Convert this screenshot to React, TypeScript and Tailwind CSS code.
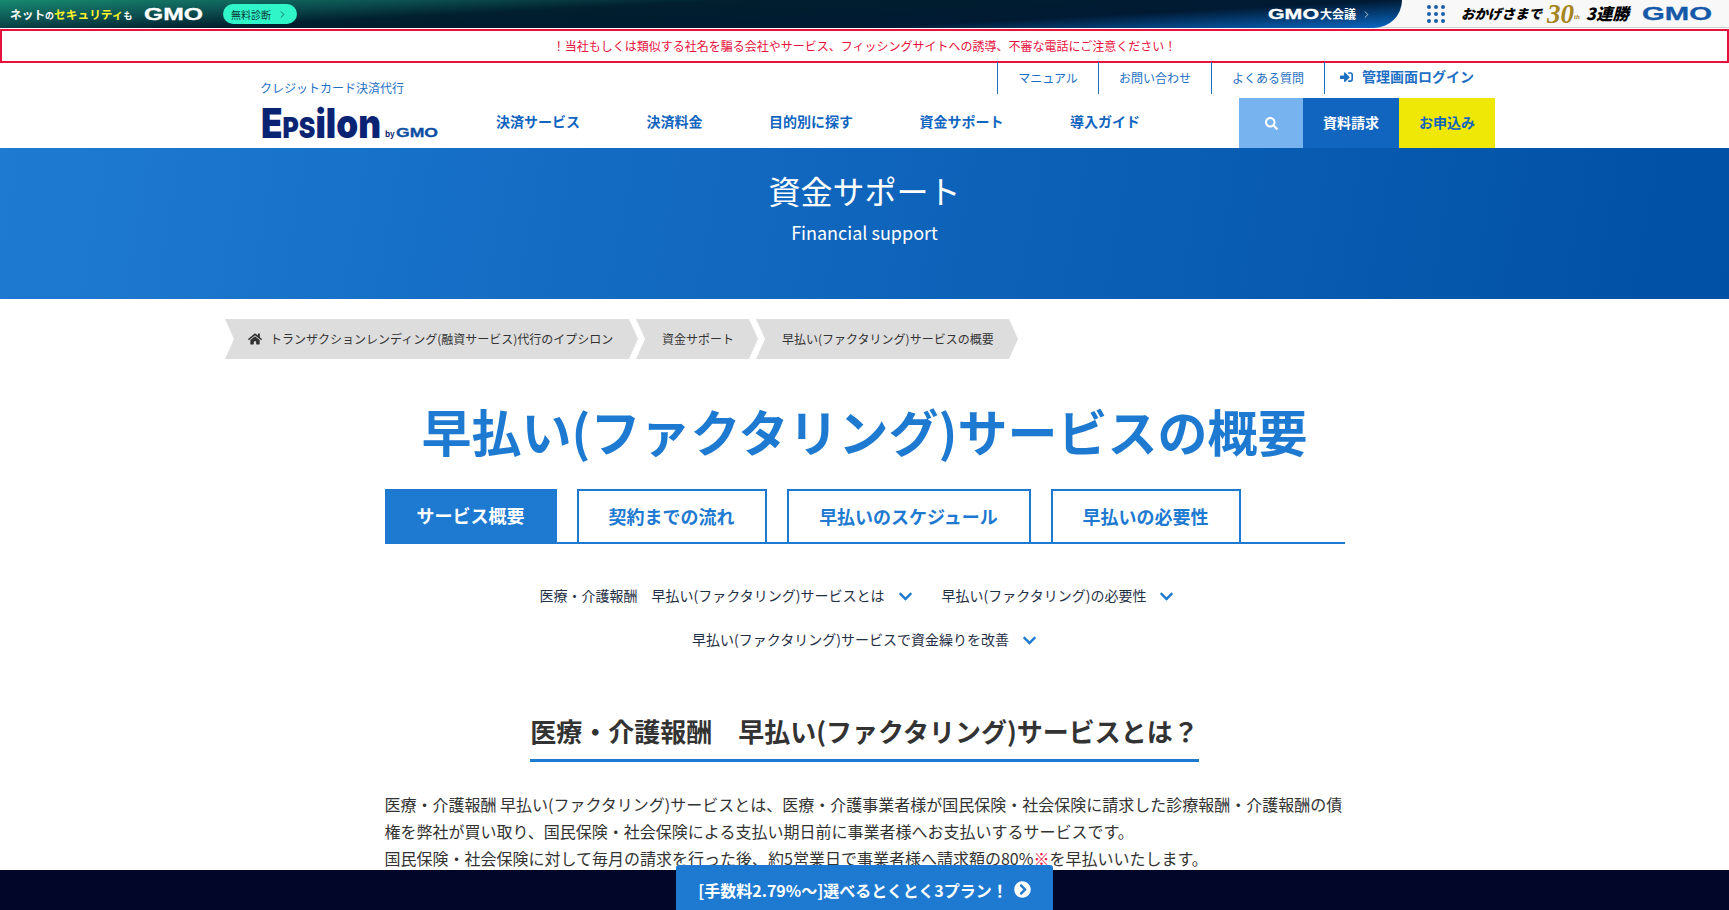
import { FaChevronCircleRight, FaChevronDown, FaHome, FaSearch, FaSignInAlt } from "react-icons/fa";
import { ChevronRight } from "lucide-react";

const GmoLogo = ({ width, height, color }: { width: number; height: number; color: string }) => (
  <svg width={width} height={height} viewBox={`0 0 ${width} ${height}`} className="block overflow-visible">
    <text
      x="0"
      y={height - 1}
      textLength={width}
      lengthAdjust="spacingAndGlyphs"
      fontFamily="Liberation Sans, sans-serif"
      fontWeight="700"
      fontSize={height * 1.25}
      fill={color}
      stroke={color}
      strokeWidth="0.3"
    >
      GMO
    </text>
  </svg>
);

const EpsilonLogo = () => (
  <div className="flex items-end w-[178px] h-[34px]">
    <svg width="122" height="34" viewBox="0 0 122 34" className="block overflow-visible">
      <text
        x="1"
        y="32"
        textLength="120"
        lengthAdjust="spacingAndGlyphs"
        fontFamily="Inter, sans-serif"
        fontWeight="900"
        fontSize="41"
        fill="#0b2373"
      >
        E<tspan fontSize="29">PS</tspan>ilon
      </text>
    </svg>
    <span className="text-[8px] leading-[10px] text-[#0b2373] ml-[3px] mr-[1px] mb-[1px] font-bold">by</span>
    <div className="mb-[2px]">
      <GmoLogo width={42} height={10} color="#0b4ea2" />
    </div>
  </div>
);

const TopBar = () => (
  <div className="flex h-[28px] bg-[#f8f8f8] border-b border-[#d0d0d0]">
    <div className="w-[1402px] h-[28px] rounded-br-[34px] bg-[linear-gradient(177deg,#178a70_0%,#0c4f50_22%,#011f2e_38%,#001a33_72%,#0a6ac8_100%)] flex items-center">
      <div className="ml-[10px] text-[11.7px] font-bold text-white whitespace-nowrap">
        ネット<span className="text-[9px]">の</span>
        <span className="text-[#f8f02a]">セキュリティ</span>
        <span className="text-[9px]">も</span>
      </div>
      <div className="ml-[11px]">
        <GmoLogo width={59} height={13} color="#ffffff" />
      </div>
      <div className="ml-[20px] w-[74px] h-[20px] rounded-full bg-[#30f5c8] flex items-center justify-center gap-[6px] text-[10px] text-[#0b3a3a]">
        無料診断
        <ChevronRight size={11} strokeWidth={1.5} />
      </div>
      <div className="ml-auto mr-[30px] flex items-center gap-[5px]">
        <div className="flex items-center gap-[1px]">
          <GmoLogo width={51} height={11} color="#ffffff" />
          <span className="text-[12px] font-bold text-white">大会議</span>
        </div>
        <ChevronRight size={11} strokeWidth={1.5} className="text-white" />
      </div>
    </div>
    <div className="flex-1 flex items-center">
      <div className="ml-[25px] grid grid-cols-3 gap-[3px]">
        {Array.from({ length: 9 }).map((_, i) => (
          <span key={i} className="w-[4px] h-[4px] rounded-full bg-[#1b5fa8]" />
        ))}
      </div>
      <div className="ml-[16px] flex items-center italic font-black text-black text-[13.5px] whitespace-nowrap">
        おかげさまで
        <span className="ml-[5px] font-['Liberation_Serif',serif] text-[27px] leading-[26px] font-bold text-[#a5851f]">
          30
        </span>
        <span className="font-['Liberation_Serif',serif] text-[7px] mt-[8px] text-[#a5851f] mr-[6px]">th</span>
        <span className="text-[16.5px]">3連勝</span>
      </div>
      <div className="ml-[13px]">
        <GmoLogo width={70} height={15} color="#1459a8" />
      </div>
    </div>
  </div>
);

const Header = () => (
  <div className="w-[1235px] ml-[260px] h-[86px]">
    <div className="flex h-[32px] items-end">
      <div className="text-[12px] leading-[18px] -mb-[3px] text-[#1e6fc4]">クレジットカード決済代行</div>
      <div className="ml-auto flex h-[32px] self-start mr-[21px] text-[#1e6fc4] whitespace-nowrap">
        <a className="w-[101px] border-l border-[#1e6fc4] flex items-center justify-center text-[12px] pb-[1px]">マニュアル</a>
        <a className="w-[113px] border-l border-[#1e6fc4] flex items-center justify-center text-[12px] pb-[1px]">お問い合わせ</a>
        <a className="w-[113px] border-l border-[#1e6fc4] flex items-center justify-center text-[12px] pb-[1px]">よくある質問</a>
        <a className="w-[150px] border-l border-[#1e6fc4] flex items-center pl-[15px] gap-[9px] text-[14px] font-bold pb-[3px]">
          <FaSignInAlt size={14} />
          管理画面ログイン
        </a>
      </div>
    </div>
    <div className="flex items-center h-[50px] mt-[4px]">
      <div className="w-[236px]">
        <EpsilonLogo />
      </div>
      <nav className="flex gap-[66.5px] text-[14px] font-bold text-[#1165bf] -mt-[3px]">
        <a>決済サービス</a>
        <a>決済料金</a>
        <a>目的別に探す</a>
        <a>資金サポート</a>
        <a>導入ガイド</a>
      </nav>
      <div className="ml-auto flex h-[50px] text-[14px] font-bold">
        <div className="w-[64px] bg-[#77b3ef] flex items-center justify-center text-white">
          <FaSearch size={13} />
        </div>
        <div className="w-[96px] bg-[#1165bf] flex items-center justify-center text-white pb-[2px]">資料請求</div>
        <div className="w-[96px] bg-[#efe807] flex items-center justify-center text-[#1165bf] pb-[2px]">お申込み</div>
      </div>
    </div>
  </div>
);

const crumbShape =
  "[clip-path:polygon(0_0,calc(100%-9px)_0,100%_50%,calc(100%-9px)_100%,0_100%,9px_50%)]";

const Breadcrumb = () => (
  <div className="flex ml-[225px] mt-[20px] h-[40px] text-[12px] text-[#333333]">
    <div className={`w-[413px] bg-[#dddddd] flex items-center pl-[23px] gap-[8px] ${crumbShape}`}>
      <FaHome size={14} />
      トランザクションレンディング(融資サービス)代行のイプシロン
    </div>
    <div className={`w-[122px] -ml-[2px] bg-[#dddddd] flex items-center pl-[26px] ${crumbShape}`}>資金サポート</div>
    <div className={`w-[262px] -ml-[2px] bg-[#dddddd] flex items-center pl-[26px] ${crumbShape}`}>
      早払い(ファクタリング)サービスの概要
    </div>
  </div>
);

const Tabs = () => (
  <div className="flex gap-[20px] border-b-2 border-[#1e7ad1] h-[55px] text-[18px] font-bold text-[#1e7ad1]">
    <div className="w-[172px] bg-[#1e7ad1] text-white flex items-center justify-center">サービス概要</div>
    <div className="w-[190px] border-2 border-b-0 border-[#1e7ad1] flex items-center justify-center">契約までの流れ</div>
    <div className="w-[244px] border-2 border-b-0 border-[#1e7ad1] flex items-center justify-center">早払いのスケジュール</div>
    <div className="w-[190px] border-2 border-b-0 border-[#1e7ad1] flex items-center justify-center">早払いの必要性</div>
  </div>
);

const AnchorLink = ({ label }: { label: string }) => (
  <a className="flex items-center gap-[13px] text-[14px] text-[#1f2f46]">
    {label}
    <FaChevronDown size={15} className="text-[#1e7ad1] mt-[2px]" />
  </a>
);

const App = () => {
  return (
    <div className="w-full h-[910px] overflow-hidden bg-white font-['Noto_Sans_CJK_JP','Noto_Sans',sans-serif] text-[#333333]">
      <TopBar />
      <div className="h-[34px] border-2 border-[#e6123d] flex items-center justify-center text-[12px] text-[#e6123d] mt-[1px] -mb-[1px]">
        ！当社もしくは類似する社名を騙る会社やサービス、フィッシングサイトへの誘導、不審な電話にご注意ください！
      </div>
      <Header />
      <div className="h-[151px] pt-[20px] bg-[linear-gradient(100deg,#1e7ad1_0%,#0050a5_100%)] text-white text-center">
        <div className="text-[32px] leading-[44px]">資金サポート</div>
        <div className="text-[18px] leading-[28px] mt-[6px]">Financial support</div>
      </div>
      <Breadcrumb />
      <h1 className="mt-[31px] text-center text-[50px] leading-[80px] font-bold text-[#1e7ad1]">
        早払い(ファクタリング)サービスの概要
      </h1>
      <div className="w-[960px] mx-auto mt-[19px]">
        <Tabs />
        <div className="mt-[41px] flex flex-wrap justify-center gap-y-[24px] leading-[20px]">
          <div className="flex gap-x-[29px] pr-[15px]">
            <AnchorLink label="医療・介護報酬　早払い(ファクタリング)サービスとは" />
            <AnchorLink label="早払い(ファクタリング)の必要性" />
          </div>
          <div className="w-full flex justify-center">
            <AnchorLink label="早払い(ファクタリング)サービスで資金繰りを改善" />
          </div>
        </div>
        <div className="flex justify-center mt-[61px]">
          <h2 className="text-[26px] leading-[42px] font-bold text-[#333333] pb-[7px] border-b-[3px] border-[#1e7ad1]">
            医療・介護報酬　早払い(ファクタリング)サービスとは？
          </h2>
        </div>
        <p className="mt-[29px] text-[16px] leading-[27px]">
          医療・介護報酬 早払い(ファクタリング)サービスとは、医療・介護事業者様が国民保険・社会保険に請求した診療報酬・介護報酬の債権を弊社が買い取り、国民保険・社会保険による支払い期日前に事業者様へお支払いするサービスです。
          <br />
          国民保険・社会保険に対して毎月の請求を行った後、約5営業日で事業者様へ請求額の80%
          <span className="text-[#e6123d]">※</span>を早払いいたします。
        </p>
      </div>
      <div className="fixed bottom-0 left-0 right-0 h-[40px] bg-[#020629] flex justify-center">
        <a className="w-[377px] h-[45px] -mt-[5px] pt-[4px] rounded-t-[3px] bg-[#1e7ad1] flex items-center justify-center gap-[6px] text-white text-[16px] font-bold">
          [手数料2.79%〜]選べるとくとく3プラン！
          <FaChevronCircleRight size={17} />
        </a>
      </div>
    </div>
  );
};

export default App;
